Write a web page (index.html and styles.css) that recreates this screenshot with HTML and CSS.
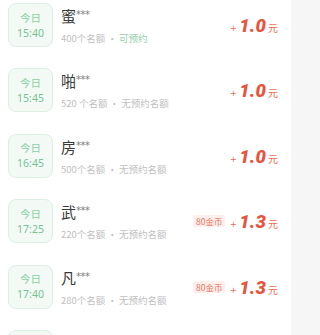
FILE: index.html
```html
<!DOCTYPE html>
<html lang="zh">
<head>
<meta charset="utf-8">
<link rel="stylesheet" href="styles.css">
</head>
<body>
<div class="page">
  <div class="list">
    <div class="row">
      <div class="date"><span class="d">今日</span><span class="t">15:40</span></div>
      <div class="info">
        <div class="name">蜜<span class="stars">***</span></div>
        <div class="sub">400个名额 · <span class="ok">可预约</span></div>
      </div>
      <div class="price"><span class="plus">+</span><span class="num">1.0</span><span class="unit">元</span></div>
    </div>
    <div class="row">
      <div class="date"><span class="d">今日</span><span class="t">15:45</span></div>
      <div class="info">
        <div class="name">啪<span class="stars">***</span></div>
        <div class="sub">520 个名额 · 无预约名额</div>
      </div>
      <div class="price"><span class="plus">+</span><span class="num">1.0</span><span class="unit">元</span></div>
    </div>
    <div class="row">
      <div class="date"><span class="d">今日</span><span class="t">16:45</span></div>
      <div class="info">
        <div class="name">房<span class="stars">***</span></div>
        <div class="sub">500个名额 · 无预约名额</div>
      </div>
      <div class="price"><span class="plus">+</span><span class="num">1.0</span><span class="unit">元</span></div>
    </div>
    <div class="row">
      <div class="date"><span class="d">今日</span><span class="t">17:25</span></div>
      <div class="info">
        <div class="name">武<span class="stars">***</span></div>
        <div class="sub">220个名额 · 无预约名额</div>
      </div>
      <span class="coin">80金币</span>
      <div class="price"><span class="plus">+</span><span class="num">1.3</span><span class="unit">元</span></div>
    </div>
    <div class="row">
      <div class="date"><span class="d">今日</span><span class="t">17:40</span></div>
      <div class="info">
        <div class="name">凡<span class="stars">***</span></div>
        <div class="sub">280个名额 · 无预约名额</div>
      </div>
      <span class="coin">80金币</span>
      <div class="price"><span class="plus">+</span><span class="num">1.3</span><span class="unit">元</span></div>
    </div>
    <div class="row">
      <div class="date"></div>
    </div>
  </div>
  <div class="side"></div>
</div>
</body>
</html>
```

FILE: styles.css
```css
html, body {
  margin: 0;
  padding: 0;
  background: #ffffff;
  height: 100%;
  overflow: hidden;
}
body {
  font-family: "Noto Sans CJK SC", "Noto Sans", sans-serif;
}
.page {
  display: flex;
  height: 335px;
}
.list {
  width: 291px;
  padding-top: 3px;
  background: #ffffff;
  overflow: hidden;
}
.side {
  flex: 1;
  background: #f6f6f6;
}
.row {
  display: flex;
  align-items: flex-start;
  height: 65.4px;
  padding-left: 8px;
  padding-right: 13px;
  box-sizing: border-box;
}
.date {
  width: 45px;
  height: 44px;
  box-sizing: border-box;
  border: 1px solid #dcefe2;
  border-radius: 8px;
  background: #f3faf5;
  display: flex;
  flex-direction: column;
  align-items: center;
  justify-content: center;
  flex: none;
}
.date .d {
  font-size: 10.5px;
  line-height: 15px;
  color: #8ad0a3;
}
.date .t {
  font-family: "Noto Sans", sans-serif;
  font-size: 10.5px;
  line-height: 15px;
  color: #76c292;
  margin-top: 1px;
}
.info {
  flex: 1;
  margin-left: 8px;
  padding-top: 2px;
  min-width: 0;
}
.name {
  font-size: 15px;
  line-height: 20px;
  color: #3a3a3a;
  white-space: nowrap;
}
.stars {
  font-family: "DejaVu Sans", sans-serif;
  font-size: 10px;
  color: #808080;
  vertical-align: 4px;
  letter-spacing: -0.5px;
}
.sub {
  margin-top: 5px;
  font-size: 9.5px;
  line-height: 14px;
  color: #c0c0c0;
  white-space: nowrap;
}
.ok {
  color: #95d0aa;
}
.coin {
  flex: none;
  margin-top: 16px;
  margin-right: 5px;
  font-size: 8.5px;
  line-height: 12px;
  padding: 0 3px;
  border-radius: 2px;
  background: #fdefec;
  color: #e8735e;
}
.price {
  flex: none;
  margin-top: 11px;
  display: flex;
  align-items: baseline;
  color: #e7533d;
}
.plus {
  font-family: "Noto Sans", sans-serif;
  font-size: 10px;
  margin-right: 3px;
  color: #ee7a64;
}
.num {
  font-family: "Roboto", sans-serif;
  font-weight: 900;
  font-style: italic;
  font-size: 18.5px;
  line-height: 24px;
  letter-spacing: 0.2px;
}
.unit {
  font-size: 10px;
  margin-left: 2px;
  color: #ec6d55;
}
```
